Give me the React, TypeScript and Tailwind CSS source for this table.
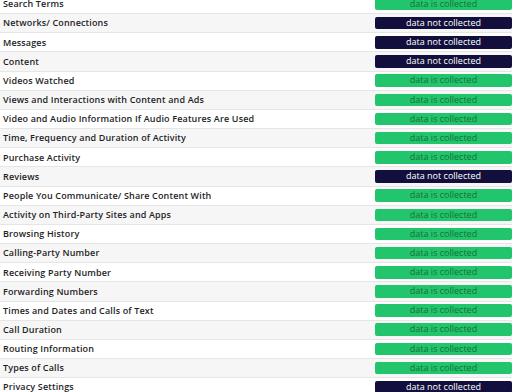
const rows: [string, boolean][] = [
  ["Search Terms", true],
  ["Networks/ Connections", false],
  ["Messages", false],
  ["Content", false],
  ["Videos Watched", true],
  ["Views and Interactions with Content and Ads", true],
  ["Video and Audio Information If Audio Features Are Used", true],
  ["Time, Frequency and Duration of Activity", true],
  ["Purchase Activity", true],
  ["Reviews", false],
  ["People You Communicate/ Share Content With", true],
  ["Activity on Third-Party Sites and Apps", true],
  ["Browsing History", true],
  ["Calling-Party Number", true],
  ["Receiving Party Number", true],
  ["Forwarding Numbers", true],
  ["Times and Dates and Calls of Text", true],
  ["Call Duration", true],
  ["Routing Information", true],
  ["Types of Calls", true],
  ["Privacy Settings", false],
]

export default function App() {
  return (
    <div className="w-[512px] h-[392px] overflow-hidden bg-white font-['Open_Sans',sans-serif]">
      <div className="-mt-[5px]">
        {rows.map(([label, collected], i) => (
          <div
            key={label}
            className={`flex items-center justify-between h-[19.16px] border-b border-[#e6e6e6] pl-[3px] ${
              i % 2 === 1 ? "bg-[#f6f6f6]" : "bg-white"
            }`}
          >
            <span className="text-[9px] font-semibold text-[#1e1e1e] tracking-[0.15px]">{label}</span>
            {collected ? (
              <span className="w-[137px] h-[12.5px] rounded-[2px] bg-[#22c56b] text-[#17703c] text-[9px] leading-[12.5px] text-center">
                data is collected
              </span>
            ) : (
              <span className="w-[137px] h-[12.5px] rounded-[2px] bg-[#130f3c] text-white text-[9px] leading-[12.5px] text-center">
                data not collected
              </span>
            )}
          </div>
        ))}
      </div>
    </div>
  )
}
